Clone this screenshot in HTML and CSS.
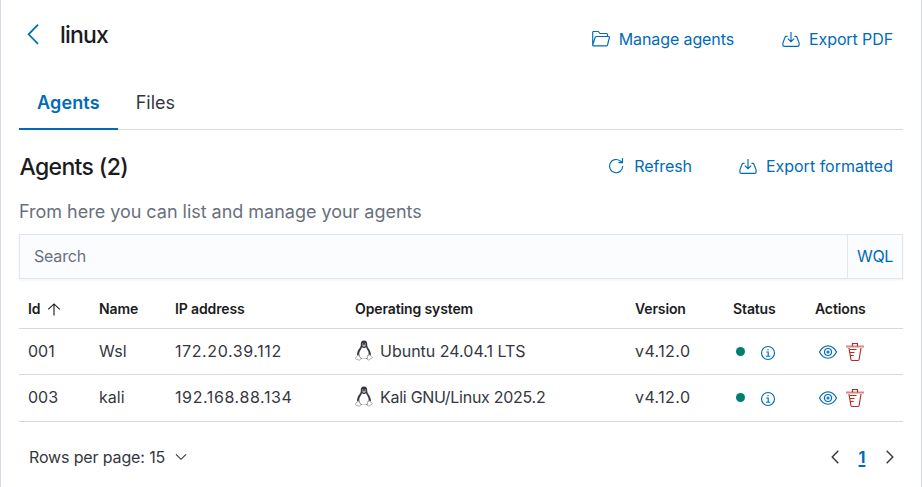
FILE: index.html
```
<!DOCTYPE html>
<html lang="en">
<head>
<meta charset="utf-8">
<title>linux - Agents</title>
<link rel="stylesheet" href="styles.css">
</head>
<body>
<svg class="defs" aria-hidden="true">
  <symbol id="export" viewBox="0 0 18 18"><path d="M5.600 6.400H4.300c-.7 0-1.100.3-1.300.9L.9 13v2.100c0 .8.500 1.300 1.300 1.300h13.600c.8 0 1.300-.5 1.300-1.300V13L15 7.300c-.2-.6-.6-.9-1.300-.9h-1.300M9 2v9.500M5.800 8.600 9 11.700l3.200-3.100"/></symbol>
  <symbol id="tux" viewBox="0 0 18 21">
    <path fill="#343741" d="M9 .4C6.600.4 5.700 2 5.800 4c.1 2.300-.3 3-1.500 4.600C3 10.200 2.300 12 2 14.500L4 18.800h10l2-4.300C15.600 12 14.900 10.100 13.600 8.500 12.300 6.800 12.200 6 12.200 4 12.200 1.800 11.300.4 9 .4Z"/>
    <path fill="#fff" d="M7 7.200 9 8.200l2.200-1c.4 1.800 2.600 3.800 2.500 6.500-.1 2.600-1.800 5.100-4.700 5.100s-4.800-2.600-4.800-5.100c0-2.600 2.300-4.500 2.800-6.500Z"/>
    <path fill="#b5aca0" d="M7 5.500 9 4.600l2.200.9L9 7.200Z"/>
    <path fill="#d8dade" d="M7.200 3.400h1v1h-1zM9.800 3.400h1v1h-1z"/>
    <path fill="#fff" stroke="#96979d" stroke-width=".8" d="M3.300 14.800 6 18.500c-.2 1.400-1.100 1.900-2.300 1.500L.9 19.100c-.6-.3-.3-1.100-.1-1.700.1-.8.800-.7 1.300-1 .4-.6.500-1.400 1.200-1.600ZM14.700 14.800c.8.200.7 1 1.200 1.500.5.500 1.300.6 1.400 1.200.1.500-1.500 1.200-2.400 1.900-1 .9-2.500.8-2.700-.4-.1-1.500.2-2.700.6-3.800.6.400 1.300.3 1.900-.4Z"/>
  </symbol>
  <symbol id="info" viewBox="0 0 16 16"><circle cx="8" cy="8" r="6.500"/><path d="M6.300 7h1.900v4M6 11.200h4.200M7.300 4.700h1.500"/></symbol>
  <symbol id="eye" viewBox="0 0 20 16"><path d="M1.500 8C3.500 4 6.600 1.800 10 1.800S16.500 4 18.500 8c-2 4-5.100 6.200-8.500 6.200S3.500 12 1.500 8Z"/><circle cx="10" cy="8" r="3.500"/><circle cx="10" cy="8" r="1"/></symbol>
  <symbol id="trash" viewBox="0 0 18 20"><path class="lid" d="M0 4.500h18"/><path d="M6.500 4.200V1.500h5v2.700M3 6l1.900 11.500c.1.600.4 1 1 1h6.200c.6 0 .9-.4 1-1L15 6M4 7.500h6.500M4.300 10.500H8.500M4.800 13.500h3"/></symbol>
</svg>
<main class="panel">
  <header class="bar page-head">
    <div class="title-group">
      <svg class="back" viewBox="0 0 12 20"><path d="m11 .7-9.400 9.600 9.400 9.500"/></svg>
      <h1>linux</h1>
    </div>
    <div class="links">
      <a class="manage"><svg class="icon" viewBox="0 0 18 18"><path d="M.7 15V2.300c0-.5.300-.8.800-.8h4.800l1.700 2h6.500c.6 0 1 .4 1 1v2M.7 15.200 3.200 7.300c.2-.5.400-.8 1-.8h12.400c.7 0 1 .4.800 1l-1.900 7.500c-.2.600-.5.900-1.100.9H1.500c-.5 0-.8-.3-.8-.7Z"/></svg><span>Manage agents</span></a>
      <a class="pdf"><svg class="icon"><use href="#export"/></svg><span>Export PDF</span></a>
    </div>
  </header>
  <nav class="tabs"><a class="tab active">Agents</a><a class="tab">Files</a></nav>
  <section>
    <div class="bar list-head">
      <h2>Agents (2)</h2>
      <div class="links">
        <a class="refresh"><svg class="icon" viewBox="0 0 18 18"><path d="M15.700 9A6.600 6.600 0 1 1 13.300 4l2.100 1.500M15.500 1v4.600H11.400"/></svg><span>Refresh</span></a>
        <a class="formatted"><svg class="icon"><use href="#export"/></svg><span>Export formatted</span></a>
      </div>
    </div>
    <p class="intro">From here you can list and manage your agents</p>
    <div class="search"><span class="placeholder">Search</span><a class="wql">WQL</a></div>
    <div class="table">
      <div class="row head">
        <div class="sort">Id <svg viewBox="0 0 14 14"><path d="M7 13.500V1M.8 6.800 7 1l6.200 5.800"/></svg></div><div>Name</div><div>IP address</div><div>Operating system</div><div>Version</div><div>Status</div><div>Actions</div>
      </div>
      <div class="row">
        <div>001</div><div>Wsl</div><div class="ip">172.20.39.112</div><div class="os"><svg><use href="#tux"/></svg><span>Ubuntu 24.04.1 LTS</span></div><div class="version">v4.12.0</div><div class="status"><i></i><svg><use href="#info"/></svg></div><div class="actions"><svg class="eye"><use href="#eye"/></svg><svg class="trash"><use href="#trash"/></svg></div>
      </div>
      <div class="row last">
        <div>003</div><div>kali</div><div class="ip">192.168.88.134</div><div class="os kali"><svg><use href="#tux"/></svg><span>Kali GNU/Linux 2025.2</span></div><div class="version">v4.12.0</div><div class="status"><i></i><svg><use href="#info"/></svg></div><div class="actions"><svg class="eye"><use href="#eye"/></svg><svg class="trash"><use href="#trash"/></svg></div>
      </div>
    </div>
  </section>
  <footer class="bar foot">
    <div class="per-page"><span>Rows per page: 15</span><svg viewBox="0 0 12 8"><path d="m1 1.300 5 5 5-5"/></svg></div>
    <div class="pager"><svg viewBox="0 0 8 14"><path d="M7.300.7 1.200 7l6.100 6.300"/></svg><b>1</b><svg viewBox="0 0 8 14"><path d="M.7.7 6.800 7 .7 13.300"/></svg></div>
  </footer>
</main>
</body>
</html>
```
FILE: styles.css
```
* { box-sizing: border-box; }
body { margin: 0; background: #fff; color: #343741; font: 16px/24px Inter, sans-serif; }
svg { display: block; flex: none; fill: none; stroke: currentColor; stroke-width: 1.15; overflow: visible; }
.defs { position: absolute; width: 0; height: 0; }
.panel { height: 487px; padding: 0 18px; border: solid #d3dae6; border-width: 0 1px; overflow: hidden; }
.bar { display: flex; justify-content: space-between; }
h1, h2 { margin: 0; color: #1a1c21; font-weight: 500; font-size: 23px; line-height: 30px; letter-spacing: -.65px; }
h1 { letter-spacing: -.8px; }
.page-head { height: 83px; padding-top: 20px; }
.title-group { display: flex; align-items: flex-start; gap: 21.500px; padding-left: 7.500px; }
.back { width: 12px; height: 20px; margin-top: 4px; color: #006bb8; stroke-width: 1.7; }
.links { display: flex; color: #006bb8; padding-right: 10px; }
.links a { display: flex; align-items: center; height: 24px; }
.page-head .links { padding-top: 7px; gap: 48px; }
.icon { width: 18px; height: 18px; margin-right: 9px; }
.page-head a, .refresh { letter-spacing: -.1px; }
.tabs { display: flex; height: 47px; border-bottom: 1px solid #d3dae6; }
.tab { height: 47px; padding: 8px 18px; font-size: 18px; }
.active { color: #006bb8; font-weight: 600; letter-spacing: .15px; border-bottom: 2px solid #006bb8; }
.list-head { height: 70px; padding-top: 22px; padding-left: .5px; }
.list-head .links { padding-top: 2px; gap: 47px; }
.intro { margin: 0; height: 34px; color: #69707d; font-size: 18px; letter-spacing: -.02px; }
.search { display: flex; height: 45px; border: 1px solid #e2e5ee; background: #fbfcfd; box-shadow: 0 1px 2px #d9dee866; line-height: 43px; }
.placeholder { flex: 1; padding-left: 14px; color: #69707d; letter-spacing: -.2px; }
.wql { width: 55px; border-left: 1px solid #e2e5ee; text-align: center; color: #006bb8; letter-spacing: -.4px; }
.row { display: grid; grid-template-columns: 71px 76px 180px 280px 98px 82px 88px; align-items: center; height: 46px; padding: 0 0 1px 9px; border-bottom: 1px solid #d3dae6; }
.row.last { height: 47px; padding-bottom: 2px; }
.row.head { height: 50px; padding-top: 11px; padding-bottom: 0; font-size: 14px; font-weight: 600; color: #1a1c21; letter-spacing: -.12px; }
.ip { letter-spacing: .6px; }
.version { letter-spacing: .4px; }
.sort { display: flex; align-items: center; gap: 6.500px; }
.sort svg { width: 14px; height: 13px; stroke-width: 1.2; }
.os { display: flex; align-items: center; gap: 7px; }
.kali { letter-spacing: -.27px; }
.os svg { width: 18px; height: 21px; stroke: none; margin-top: -2px; }
.status { display: flex; align-items: center; gap: 15px; padding: 1px 0 0 2.500px; }
.status i { width: 9px; height: 9px; border-radius: 50%; background: #007e70; }
.status svg { width: 16px; height: 16px; color: #006bb8; margin-top: 2px; }
.actions { display: flex; align-items: center; gap: 8px; padding: 1px 0 0 3px; }
.eye { width: 20px; height: 16px; color: #006bb8; }
.trash { width: 18px; height: 20px; color: #bd271e; }
.lid { stroke-width: 2; opacity: .55; }
.foot { padding: 22px 9px 0 10px; }
.per-page { display: flex; align-items: center; gap: 10px; height: 26px; letter-spacing: -.14px; }
.per-page svg { width: 12px; height: 8px; }
.pager { display: flex; align-items: center; gap: 19px; height: 26px; margin-right: .5px; }
.pager svg { width: 8px; height: 14px; stroke-width: 1.4; }
.pager b { width: 9px; text-align: center; color: #006bb8; font-weight: 700; text-decoration: underline; text-decoration-thickness: 2px; text-underline-offset: 2px; }
```
